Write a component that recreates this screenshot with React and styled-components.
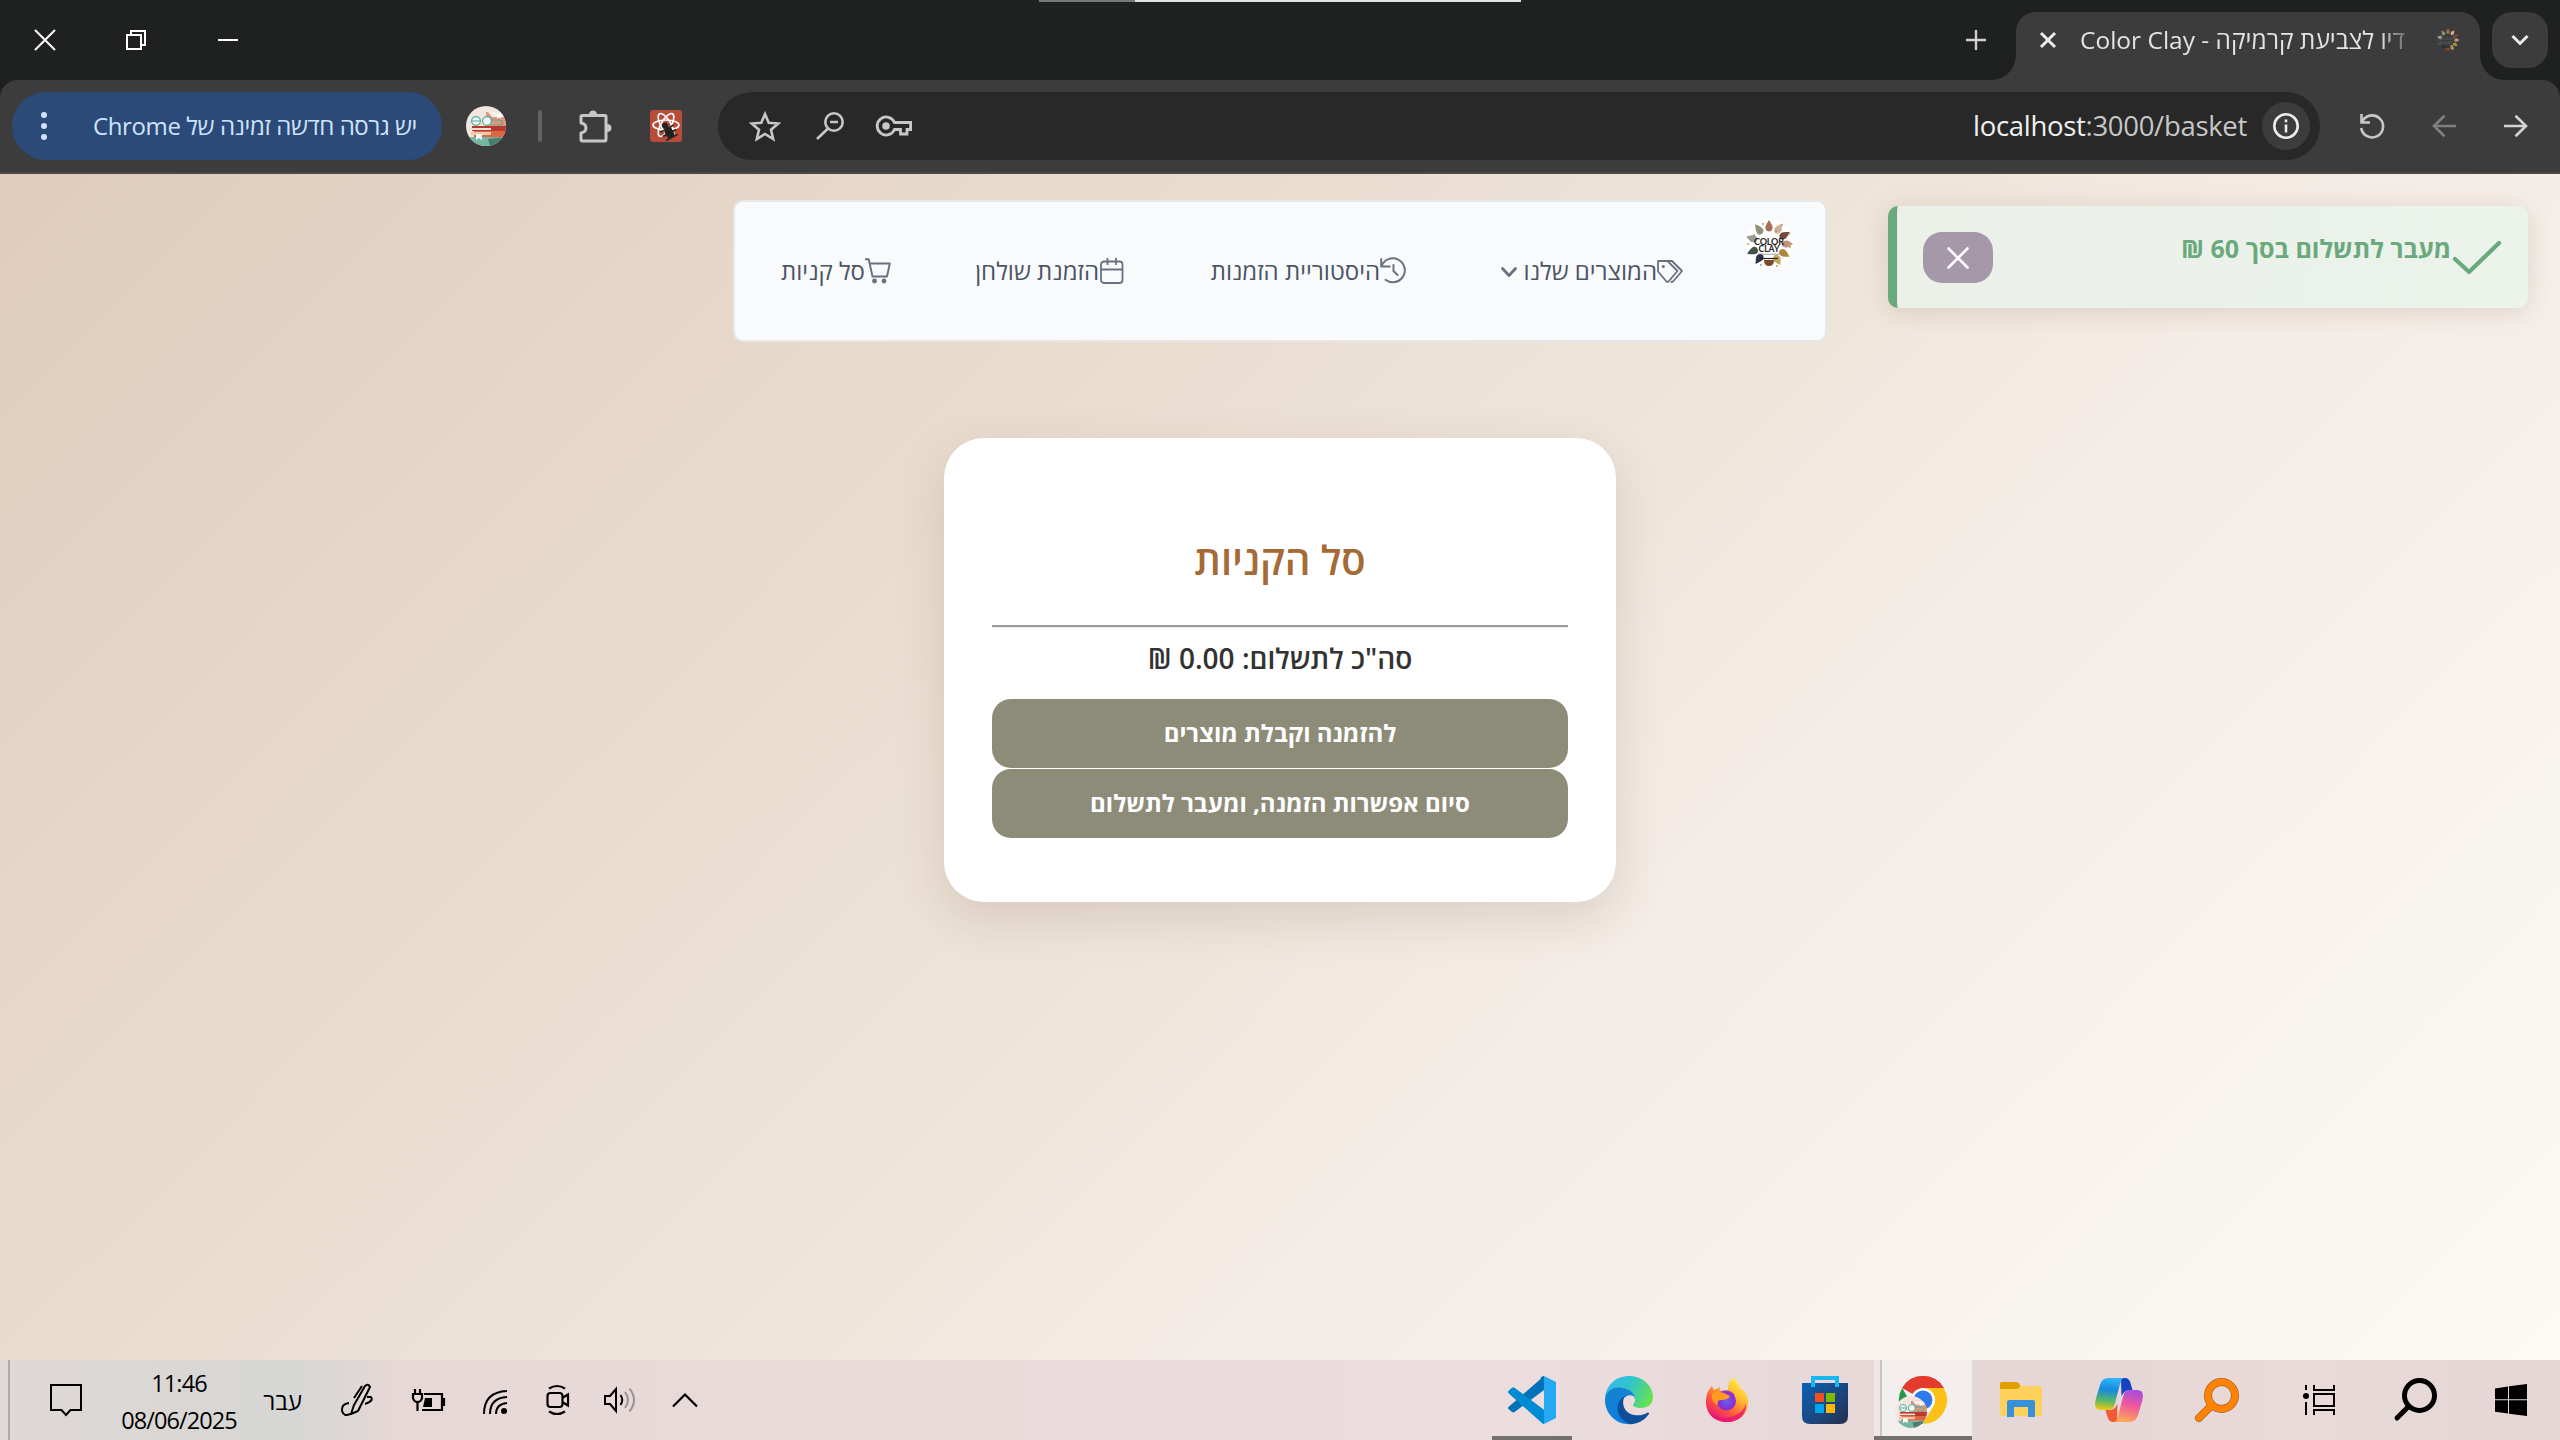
import React, { useId } from 'react';
import styled, { createGlobalStyle } from 'styled-components';

const Global = createGlobalStyle`
  * { box-sizing: border-box; }
  html, body { margin: 0; padding: 0; }
  body { font-family: "Open Sans", "Noto Sans", sans-serif; overflow: hidden; }
  svg { display: block; flex: none; overflow: visible; }
`;

const Screen = styled.div`
  width: 2560px;
  height: 1440px;
  display: flex;
  flex-direction: column;
  background: #1f2120;
`;

/* Positions a flow item after a gap */
const Slot = styled.div`
  flex: none;
  display: flex;
  align-items: center;
  margin-left: ${(p) => p.$gap || 0}px;
  margin-top: ${(p) => p.$drop || 0}px;
`;

const Label = styled.div`
  flex: none;
  direction: ${(p) => (p.$ltr ? 'ltr' : 'rtl')};
  text-align: ${(p) => p.$align || 'right'};
  width: ${(p) => p.$w}px;
  margin-left: ${(p) => p.$gap || 0}px;
  padding-top: ${(p) => p.$drop || 0}px;
  font-size: ${(p) => p.$size || 24}px;
  line-height: ${(p) => p.$lh || 32}px;
  letter-spacing: ${(p) => p.$track || 0}px;
  color: ${(p) => p.$color || '#fff'};
  font-weight: ${(p) => p.$weight || 400};
  white-space: nowrap;
`;

/* ---------- title bar ---------- */
const TitleBar = styled.header`
  position: relative;
  height: 80px;
  flex: none;
  display: flex;
  align-items: flex-end;
  justify-content: space-between;
`;
const TopLine = styled.div`
  position: absolute;
  top: 0;
  left: 1039px;
  width: 482px;
  height: 2px;
  background: linear-gradient(90deg, #757a78 96px, #dfe5e2 96px);
`;
const WindowButtons = styled.div`
  height: 80px;
  display: flex;
  align-items: center;
`;
const TabStrip = styled.div`
  height: 80px;
  width: 594px;
  display: flex;
  align-items: flex-end;
`;
const NewTab = styled.div`
  height: 80px;
  display: flex;
  align-items: center;
  width: 50px;
`;
const Tab = styled.div`
  position: relative;
  width: 464px;
  height: 68px;
  padding-left: 23px;
  border-radius: 20px 20px 0 0;
  background: #3c3c3c;
  display: flex;
  align-items: center;
  padding-bottom: 12px;
  &::before, &::after {
    content: "";
    position: absolute;
    bottom: 0;
    width: 24px;
    height: 24px;
  }
  &::before { left: -24px; background: radial-gradient(circle at 0 0, transparent 23.5px, #3c3c3c 24px); }
  &::after { right: -24px; background: radial-gradient(circle at 100% 0, transparent 23.5px, #3c3c3c 24px); }
`;
const TabTitle = styled(Label)`
  overflow: hidden;
  mask-image: linear-gradient(90deg, #000 300px, transparent 336px);
`;
const TabMenu = styled.div`
  width: 56px;
  height: 56px;
  margin: 0 12px 12px;
  border-radius: 20px;
  background: #3c3c3c;
  display: flex;
  align-items: center;
  justify-content: center;
  padding-bottom: 0;
`;

/* ---------- toolbar ---------- */
const Toolbar = styled.div`
  height: 94px;
  flex: none;
  background: #3c3c3c;
  border-bottom: 2px solid #4b4849;
  border-radius: 18px 18px 0 0;
  display: flex;
  align-items: center;
  padding: 0 0 0 12px;
`;
const UpdatePill = styled.div`
  width: 430px;
  height: 68px;
  border-radius: 34px;
  background: #2b4a77;
  display: flex;
  align-items: center;
  padding-left: 28px;
`;
const Divider = styled.div`
  width: 4px;
  height: 32px;
  margin-left: 32px;
  border-radius: 2px;
  background: #636363;
`;
const Omnibox = styled.div`
  width: 1602px;
  height: 68px;
  margin-left: 36px;
  border-radius: 34px;
  background: #282828;
  display: flex;
  align-items: center;
  padding-left: 31px;
`;
const InfoChip = styled.div`
  width: 48px;
  height: 48px;
  margin-left: 19px;
  border-radius: 50%;
  background: #3c3c3c;
  display: flex;
  align-items: center;
  justify-content: center;
`;
const Host = styled.span` color: #f0f0f0; `;

/* ---------- page ---------- */
const Page = styled.main`
  position: relative;
  flex: 1;
  padding-top: 26px;
  display: flex;
  flex-direction: column;
  align-items: center;
  background: linear-gradient(135deg, #dfccbc 0%, #efe6db 53%, #f3eae4 60%, #fcfaf4 100%);
`;
const Menubar = styled.nav`
  width: 1094px;
  height: 142px;
  border: 2px solid #e5e7eb;
  border-radius: 10px;
  background: #f9fafc;
  display: flex;
  align-items: center;
`;
const LogoSlot = styled.div`
  align-self: flex-start;
  margin: 17px 0 0 61px;
`;
const Card = styled.section`
  width: 672px;
  height: 464px;
  margin-top: 96px;
  padding: 92px 48px 0;
  border-radius: 40px;
  background: #fff;
  box-shadow: 0 16px 48px rgba(90, 60, 40, 0.15);
  display: flex;
  flex-direction: column;
  align-items: center;
`;
const Title = styled.h1`
  margin: 0;
  direction: rtl;
  font-size: 40px;
  line-height: 60px;
  font-weight: 600;
  color: #a56a35;
  white-space: nowrap;
`;
const Rule = styled.hr`
  width: 100%;
  margin: 35px 0 0;
  border: 0;
  height: 3px;
  border-top: 2px solid #9a9a9a;
  border-bottom: 1px solid #eee;
`;
const Total = styled.div`
  direction: rtl;
  margin-top: 10px;
  height: 61px;
  font-size: 28px;
  line-height: 40px;
  font-weight: 600;
  color: #333;
  white-space: nowrap;
`;
const Action = styled.button`
  width: 100%;
  height: 69px;
  margin: 0 0 1px;
  padding: 0 0 2px;
  border: 0;
  border-radius: 19px;
  background: #8d8c78;
  color: #fff;
  direction: rtl;
  font-family: inherit;
  font-size: 24px;
  font-weight: 700;
  letter-spacing: ${(p) => p.$track || 0}px;
`;
const Toast = styled.aside`
  position: absolute;
  left: 1888px;
  top: 32px;
  width: 640px;
  height: 102px;
  border-left: 9px solid #69a97c;
  border-radius: 10px;
  background: linear-gradient(100deg, #ebf0e9, #ebf3eb);
  box-shadow: 0 4px 24px rgba(90, 60, 40, 0.15);
  display: flex;
  align-items: flex-start;
  padding: 26px 0 0 26px;
`;
const ToastClose = styled.button`
  width: 70px;
  height: 51px;
  padding: 0;
  border: 0;
  border-radius: 19px;
  background: #a598a8;
  display: flex;
  align-items: center;
  justify-content: center;
`;

/* ---------- taskbar ---------- */
const Taskbar = styled.footer`
  height: 80px;
  flex: none;
  display: flex;
  justify-content: space-between;
  background: linear-gradient(90deg, #dfd8d6 0, #d9d7d5 200px, #d6d6d4 280px, #dad7d5 330px, #e5d8d6 390px, #e7dad8 750px, #eadcdc 1200px, #ecdedf 1500px, #e6d8d7 1860px, #e5d7d6 2100px, #e8dad7 2300px, #e4d6d5 2560px);
`;
const Tray = styled.div`
  display: flex;
  align-items: center;
`;
const DesktopEdge = styled.div`
  width: 2px;
  height: 80px;
  margin-left: 8px;
  background: #aea8a8;
`;
const Clock = styled.div`
  width: 140px;
  margin-left: 28px;
  padding-top: 4px;
  display: flex;
  flex-direction: column;
  align-items: center;
  font-size: 23.5px;
  line-height: 37px;
  letter-spacing: -0.9px;
  color: #000;
`;
const Apps = styled.div` display: flex; `;
const App_ = styled.div`
  width: 98px;
  height: 80px;
  display: flex;
  align-items: center;
  justify-content: center;
  padding-left: ${(p) => p.$nudge || 0}px;
  background: ${(p) =>
    p.$active ? 'linear-gradient(90deg, #efe6e5 6px, #cfc3c2 6px, #cfc3c2 8px, #f5eeee 8px)' : 'transparent'};
  box-shadow: ${(p) => (p.$active ? 'inset 0 -4px 0 #757070' : 'none')};
`;
const Running = styled(App_)`
  background: linear-gradient(#757070, #757070) 10px 100% / 80px 4px no-repeat;
`;

/* ---------- drawings ---------- */
const S = ({ w, h, vb, children, ...r }) => (
  <svg width={w} height={h} viewBox={vb || `0 0 ${w} ${h}`} fill="none" {...r}>{children}</svg>
);

function Avatar({ size }) {
  const id = useId();
  return (
    <S w={size} h={size} vb="0 0 40 40">
      <clipPath id={id}><circle cx="20" cy="20" r="20" /></clipPath>
      <g clipPath={`url(#${id})`}>
        <rect width="40" height="40" fill="#f3e6e0" />
        <path d="M20 6h20v14H20z" fill="#e2957b" />
        <path d="M22 6h18v5H26z" fill="#f4efe9" />
        <path d="M31 8h4v5l-2-2-2 2z" fill="#fff" />
        <rect x="6" y="20" width="34" height="5" fill="#b93a2c" />
        <rect x="3" y="22" width="22" height="2" fill="#f0dfd4" />
        <rect x="8" y="25" width="32" height="6" fill="#e0643f" />
        <rect x="5" y="26" width="20" height="3" fill="#f2c7ae" />
        <path d="M0 31h40v9H0z" fill="#78b5a3" />
        <path d="M22 33l18-2v9H24z" fill="#4a7f70" />
        <path d="M10 28h6v6l-3-2-3 2z" fill="#fff" />
        <g stroke="#4fae9c" strokeWidth="1.2">
          <circle cx="10" cy="15" r="4.4" fill="#eef6f3" />
          <circle cx="21" cy="15" r="4.4" fill="#eef6f3" />
          <path d="M6 15h8M25 14h9q3 1 2 5h-9" />
        </g>
      </g>
    </S>
  );
}

const PETALS = [
  ['#a56d55', 0, 9], ['#cfae9a', 32, 7.5], ['#76483a', 60, 9], ['#bf947c', 90, 7.5], ['#ad883c', 122, 9],
  ['#c3a860', 152, 8], ['#2a3347', 214, 9], ['#40534a', 246, 10], ['#989c97', 288, 8], ['#8e917b', 325, 10],
];
function Logo({ size, dark }) {
  return (
    <S w={size} h={size} vb="0 0 50 50">
      {!dark && <circle cx="25" cy="25" r="24" fill="#fff" />}
      {PETALS.map(([c, a, l]) => (
        <path key={a} fill={c} transform={`rotate(${a} 25 25)`}
          d={`M25 ${1}Q29 7 28.6 ${l}Q28 12.5 25 12.5Q22 12.5 21.4 ${l}Q21 7 25 1z`} />
      ))}
      <path d="M20 41h10q0 6-5 6t-5-6z" fill="#7b4a28" />
      <path d="M16 39.5h18" stroke="#222" strokeWidth="1.2" />
      {[[19, 5], [32, 12], [10, 16], [4, 25], [45, 15], [46, 28], [17, 46], [33, 47], [38, 6]].map(([x, y]) => (
        <circle key={`${x}-${y}`} cx={x} cy={y} r="0.9" fill="#b08c50" />
      ))}
      {!dark && <path d="M14 35.2h22" stroke="#777" strokeWidth="0.7" />}
      <text x="25" y="25.5" textAnchor="middle" fontFamily="Lato, sans-serif" fontSize="9" fontWeight="700" fill={dark ? '#555' : '#222'} textLength="30">COLOR</text>
      <text x="25" y="33.3" textAnchor="middle" fontFamily="Lato, sans-serif" fontSize="8.6" fontWeight="700" fill={dark ? '#555' : '#222'} textLength="21">CLAY</text>
    </S>
  );
}

const Vscode = () => (
  <S w={48} h={48}>
    <path d="M0 15.5l4-3.5q1.300-.9 2.600 0L36 34v14L1 17.500q-1.200-1 -1-2z" fill="#0089d0" />
    <path d="M0 32.500l4 3.500q1.300.9 2.600 0L36 14V0L1 30.500q-1.200 1 -1 2z" fill="#0073b8" />
    <path d="M0 15.500l4-3.500q1.300-.9 2.600 0L36 34v14q-1 0-2-1L1 17.500z" fill="#008bd3" />
    <path d="M36 0l12 6v36l-12 6z" fill="#27a8f2" />
    <path d="M36 0q-1.500 0-2.500 1l-1 1 3.500 10z" fill="#0073b8" />
  </S>
);
function Edge() {
  return (
    <S w={48} h={48}>
      <defs>
        <linearGradient id="eg" x1="0" y1="0" x2="48" y2="24" gradientUnits="userSpaceOnUse">
          <stop offset="0" stopColor="#35b5f5" /><stop offset=".5" stopColor="#31c5c9" /><stop offset="1" stopColor="#6be544" />
        </linearGradient>
        <linearGradient id="eb" x1="0" y1="12" x2="10" y2="48" gradientUnits="userSpaceOnUse">
          <stop offset="0" stopColor="#1583cf" /><stop offset="1" stopColor="#0d7ee0" />
        </linearGradient>
      </defs>
      <path d="M0 22C1 9 11 0 24 0c14 0 24 10 24 21 0 7-5 11-12 11-5 0-8-1.500-8-3 0-1 2-2 2-5.500C30 18 24 12 15 12 8 12 3 15 0 22z" fill="url(#eg)" />
      <path d="M0 24C0 16 7 11.500 14 11.500c9 0 15.500 5 16 11C29 19 24 18 20 21c-5 4-6 18 8 27-15 2-28-9-28-24z" fill="url(#eb)" />
      <path d="M19 22c-2 4-1 15 10 17 6 1 10-.5 13.500-2.300 1.200-.5 2 .5 1.300 1.500C39 45 32 48 25 48 14 44 10 34 14 26c1.500-3 4-5.500 8-6-1.500.5-2.500 1-3 2z" fill="#0f4f99" />
    </S>
  );
}
const Firefox = () => (
  <S w={42} h={44}>
    <defs>
      <linearGradient id="ff" x1="36" y1="4" x2="8" y2="42" gradientUnits="userSpaceOnUse">
        <stop offset="0" stopColor="#fff04a" /><stop offset=".35" stopColor="#ffb32b" /><stop offset=".65" stopColor="#ff5a3a" /><stop offset="1" stopColor="#e5127d" />
      </linearGradient>
      <radialGradient id="fp"><stop offset="0" stopColor="#6a5cf0" /><stop offset="1" stopColor="#8a2bc8" /></radialGradient>
    </defs>
    <path d="M27 0c4 2 6 6 7 10 5 3 8 8 8 14 0 12-9 20-21 20S0 36 0 24C0 17 2 12 6 8l2 4 6-3v4l8-1c0-5 1-9 5-12z" fill="url(#ff)" />
    <path d="M2 32c5 8 18 10 28 5 5-2 9-7 10-12 1 12-8 19-19 19C11 44 4 39 2 32z" fill="#ea1276" opacity=".75" />
    <circle cx="20.500" cy="23" r="9.500" fill="url(#fp)" />
    <path d="M6 16c4-4 9-4 14 0l4 2c-1 3-5 4-9 4-3 0-4 2-3 5-5-2-7-6-6-11z" fill="#ff9a1f" />
    <path d="M14 14q8-4 15 3-5 1-7-1z" fill="#9a2fc9" />
  </S>
);
const Store = () => (
  <S w={46} h={48}>
    <defs><linearGradient id="st" x1="0" y1="8" x2="40" y2="48" gradientUnits="userSpaceOnUse"><stop offset="0" stopColor="#0a62b5" /><stop offset="1" stopColor="#263358" /></linearGradient></defs>
    <path d="M0 7h46v33q0 8-8 8H8q-8 0-8-8z" fill="url(#st)" />
    <path d="M11 11V2h24v9" stroke="#19b5f5" strokeWidth="4" />
    <path d="M13 17h9v9h-9z" fill="#f25022" /><path d="M24 17h9v9h-9z" fill="#7fba00" />
    <path d="M13 28h9v9h-9z" fill="#00a4ef" /><path d="M24 28h9v9h-9z" fill="#ffb900" />
  </S>
);
const ChromeWrap = styled.div`
  position: relative;
  width: 48px;
  height: 48px;
`;
const AvatarBadge = styled.div`
  position: absolute;
  left: -4px;
  top: 20px;
`;
const Chrome = () => (
  <ChromeWrap>
    <S w={48} h={48}>
      <path d="M24 24L3.200 12A24 24 0 0 1 44.800 12z" fill="#e33b2e" />
      <path d="M3.200 12L13.600 30 24 48A24 24 0 0 1 3.200 12z" fill="#279847" />
      <path d="M44.800 12A24 24 0 0 1 24 48L34.400 30 24 12z" fill="#fbc116" />
      <path d="M3.200 12A24 24 0 0 1 44.800 12H24v8z" fill="#e33b2e" />
      <circle cx="24" cy="24" r="12" fill="#fff" /><circle cx="24" cy="24" r="9.500" fill="#3079ea" />
    </S>
    <AvatarBadge><Avatar size={32} /></AvatarBadge>
  </ChromeWrap>
);
const Folder = () => (
  <S w={42} h={36}>
    <path d="M0 2q0-2 2-2h14l5 4h19q2 0 2 2v26q0 2-2 2H2q-2 0-2-2z" fill="#ffd05a" />
    <path d="M0 2q0-2 2-2h14q3 0 4 3t-4 4H0z" fill="#dfa000" />
    <path d="M7 20q0-2 2-2h24q2 0 2 2v15h-7V25H14v10H7z" fill="#3690dc" />
  </S>
);
const Copilot = () => (
  <S w={48} h={44}>
    <defs>
      <linearGradient id="c1" x1="10" y1="0" x2="6" y2="32" gradientUnits="userSpaceOnUse"><stop offset="0" stopColor="#2fb4f8" /><stop offset=".35" stopColor="#1689dc" /><stop offset=".7" stopColor="#5cb865" /><stop offset="1" stopColor="#f4cb0a" /></linearGradient>
      <linearGradient id="c2" x1="42" y1="12" x2="34" y2="44" gradientUnits="userSpaceOnUse"><stop offset="0" stopColor="#a34be4" /><stop offset=".5" stopColor="#f0589b" /><stop offset="1" stopColor="#fda65a" /></linearGradient>
    </defs>
    <path d="M26 0h4q4 0 5.500 5l2 7h-3q-5 0-8 6z" fill="#1742c0" />
    <path d="M22 44h-4q-4 0-5.500-5l-2-7h4q5 0 8-6z" fill="#f05a35" />
    <path d="M29 0H13Q7 0 5 7L.8 21Q-2 32 6 32h7q5 0 6.500-5L25 6q1.500-6 4-6z" fill="url(#c1)" />
    <path d="M19 44h16q6 0 8-7l4.200-14Q50 12 42 12h-7q-5 0-6.500 5L23 38q-1.500 6-4 6z" fill="url(#c2)" />
  </S>
);
const Magnifier = ({ color, edge }) => (
  <S w={44} h={44}>
    {edge && <g stroke={edge}><circle cx="26.500" cy="17.500" r="13.500" strokeWidth="8" /><path d="M17 27L4 40" strokeWidth="8" strokeLinecap="round" /></g>}
    <g stroke={color}><circle cx="26.500" cy="17.500" r={edge ? 13.5 : 15} strokeWidth={edge ? 6.5 : 5} /><path d="M16 28L4 40" strokeWidth={edge ? 6.500 : 5} strokeLinecap="round" /></g>
  </S>
);
const TaskView = () => (
  <S w={32} h={30} stroke="#000" strokeWidth="2">
    <path d="M3 0v5M3 17v13M11 0v5h20V0M11 9h20v12H11zM11 30v-5h20v5" />
    <circle cx="3" cy="11" r="3" fill="#000" stroke="none" />
  </S>
);
const Windows = () => (
  <S w={32} h={32} fill="#000">
    <path fill="#000" d="M0 4.500L13 2.500V15.200H0zM14 2.300L32 0V15.200H14zM0 16.300H13V29.500L0 27.700zM14 16.300H32V32L14 29.700z" />
  </S>
);

export default function App() {
  return (
    <Screen>
      <Global />
      <TitleBar>
        <TopLine />
        <WindowButtons>
          <Slot $gap={35}><S w={20} h={20} stroke="#fff" strokeWidth="2"><path d="M0 0l20 20M20 0L0 20" /></S></Slot>
          <Slot $gap={71}><S w={20} h={20} stroke="#fff" strokeWidth="2"><path d="M1 5h14v14H1zM5 5V1h14v14h-4" /></S></Slot>
          <Slot $gap={72}><S w={20} h={20} stroke="#fff" strokeWidth="2"><path d="M0 10h20" /></S></Slot>
        </WindowButtons>
        <TabStrip>
          <NewTab><S w={20} h={20} stroke="#d0d0d0" strokeWidth="2.400"><path d="M0 10h20M10 0v20" /></S></NewTab>
          <Tab>
            <S w={18} h={16} stroke="#ececec" strokeWidth="3"><path d="M2 1l14 14M16 1L2 15" /></S>
            <TabTitle $w={336} $gap={23} $size={24.5} $lh={40} $drop={0} $ltr $align="left" $color="#e3e3e3"><bdi dir="ltr">Color Clay - ‏דיו לצביעת קרמיקה</bdi></TabTitle>
            <Slot $gap={20}><Logo size={24} dark /></Slot>
          </Tab>
          <TabMenu><S w={18} h={10} stroke="#ececec" strokeWidth="3"><path d="M1.500 1l7.500 7.500L16.500 1" /></S></TabMenu>
        </TabStrip>
      </TitleBar>

      <Toolbar>
        <UpdatePill>
          <S w={8} h={28} fill="#d3e3fd"><g fill="#d3e3fd"><circle cx="4" cy="3" r="3" /><circle cx="4" cy="14" r="3" /><circle cx="4" cy="25" r="3" /></g></S>
          <Label $w={350} $gap={19} $size={24} $color="#cfe3fc" $track={-0.4}>יש גרסה חדשה זמינה של Chrome</Label>
        </UpdatePill>
        <Slot $gap={24}><Avatar size={40} /></Slot>
        <Divider />
        <Slot $gap={37}>
          <S w={33} h={33} stroke="#c7c7c7" strokeWidth="3">
            <path d="M3.500 5.500H26q1 0 1 1V29q0 2-1 2H3.500q-1.500 0-1.500-1.500V23q5-1 5-5t-5-5V7q0-1.500 1.500-1.500z" strokeLinejoin="round" />
            <path d="M10 5q0-4.500 4-4.500T18 5zM28 14q4.500 0 4.500 4T28 22z" fill="#c7c7c7" stroke="none" />
          </S>
        </Slot>
        <Slot $gap={38}>
          <S w={32} h={32}>
            <rect width="32" height="32" rx="3" fill="#b94c38" />
            <g stroke="#fff" strokeWidth="1.600"><ellipse cx="16" cy="15" rx="13" ry="5" /><ellipse cx="16" cy="15" rx="13" ry="5" transform="rotate(60 16 15)" /><ellipse cx="16" cy="15" rx="13" ry="5" transform="rotate(120 16 15)" /></g>
            <g transform="rotate(-28 19 21)" fill="#222"><circle cx="18" cy="14.500" r="3" /><rect x="14.500" y="17" width="8" height="11" rx="3.500" /><path d="M11 18h15M11 23h15M12 28h13" stroke="#222" strokeWidth="1.600" /></g>
          </S>
        </Slot>
        <Omnibox>
          <S w={32} h={30} stroke="#c7c7c7" strokeWidth="2.600"><path d="M16 3l3.700 8.700 9.500.8-7.200 6.200 2.200 9.300-8.200-5-8.200 5 2.200-9.300L2.800 12.500l9.500-.8z" strokeLinejoin="miter" /></S>
          <Slot $gap={35}><S w={28} h={28} stroke="#c7c7c7" strokeWidth="2.600"><circle cx="18" cy="10" r="8.700" /><path d="M12 16.500L1 27M14 10h8" /></S></Slot>
          <Slot $gap={32}><S w={36} h={20} stroke="#c7c7c7" strokeWidth="2.800"><path d="M18.500 6.500H34.600v7H31V18h-6.500v-4.500h-6A9 9 0 1 1 18.500 6.500z" /><circle cx="10" cy="10" r="3.800" fill="#c7c7c7" stroke="none" /></S></Slot>
          <Label $w={270} $gap={1061} $size={27.5} $lh={40} $ltr $color="#c7c7c7" $track={-0.3}><Host>localhost</Host>:3000/basket</Label>
          <InfoChip><S w={26} h={26} stroke="#ececec" strokeWidth="2.600"><circle cx="13" cy="13" r="11.700" /><path d="M13 11.500v8M13 6.500v2.800" /></S></InfoChip>
        </Omnibox>
        <Slot $gap={40}><S w={24} h={24} stroke="#c7c7c7" strokeWidth="2.600"><path d="M1.500 0v8.500H10M2 8A11 11 0 1 1 1.200 14" /></S></Slot>
        <Slot $gap={48}><S w={24} h={22} stroke="#7f7f7f" strokeWidth="2.600"><path d="M24 11H2M12.500.8L2 11l10.500 10.200" /></S></Slot>
        <Slot $gap={48}><S w={24} h={22} stroke="#d3d3d3" strokeWidth="2.600"><path d="M0 11h22M11.500.8L22 11 11.500 21.200" /></S></Slot>
      </Toolbar>

      <Page>
        <Menubar>
          <Label $w={88} $gap={42} $color="#4b5563">סל קניות</Label>
          <Slot><S w={26} h={26} vb="0 0 26 26" stroke="#6b7080" strokeWidth="1.900"><path d="M0 1.200h3.700L7.500 18.500H22L24.800 5.500H5" strokeLinejoin="round" /><g fill="#6b7080" stroke="none"><circle cx="9.500" cy="23" r="2.400" /><circle cx="19" cy="23" r="2.400" /></g></S></Slot>
          <Label $w={140} $gap={68} $color="#4b5563">הזמנת שולחן</Label>
          <Slot $gap={1}><S w={24} h={26} stroke="#6b7080" strokeWidth="1.800"><rect x="1" y="3.500" width="21.500" height="21.500" rx="3" /><path d="M1 11.500h21.500M7.500 0v7M16 0v7" /></S></Slot>
          <Label $w={190} $gap={66} $color="#4b5563">היסטוריית הזמנות</Label>
          <Slot><S w={26} h={26} stroke="#6b7080" strokeWidth="2"><path d="M1.200 1v7.600h8.600M1.600 8A12 12 0 1 1 5.500 21.800M13.500 7v6l4 4" strokeLinecap="round" strokeLinejoin="round" /></S></Slot>
          <Slot $gap={95} $drop={2}><S w={16} h={11} stroke="#6b7080" strokeWidth="2.800"><path d="M1.500 1.500L8 8.500l6.500-7" strokeLinecap="round" strokeLinejoin="round" /></S></Slot>
          <Label $w={140} $gap={0} $color="#4b5563">המוצרים שלנו</Label>
          <Slot><S w={26} h={24} stroke="#6b7080" strokeWidth="1.800"><path d="M1 2h9.500l10 10-9 10.500q-1 .8-2 0L1 12.500zM10.500 2H15l10 10-9 10.500q-1.200 1-2.300 0" strokeLinejoin="round" /><circle cx="6.300" cy="7.500" r="1.600" fill="#6b7080" stroke="none" /></S></Slot>
          <LogoSlot><Logo size={50} /></LogoSlot>
        </Menubar>

        <Card>
          <Title>סל הקניות</Title>
          <Rule />
          <Total>סה"כ לתשלום: 0.00 ₪</Total>
          <Action>להזמנה וקבלת מוצרים</Action>
          <Action>סיום אפשרות הזמנה, ומעבר לתשלום</Action>
        </Card>

        <Toast>
          <ToastClose><S w={22} h={22} stroke="#fff" strokeWidth="2.600"><path d="M1.500 1.500l19 19M20.500 1.500l-19 19" strokeLinecap="round" /></S></ToastClose>
          <Label $w={340} $gap={118} $size={25} $weight={700} $color="#69a97c">מעבר לתשלום בסך 60 ₪</Label>
          <Slot $gap={2} $drop={9}><S w={48} h={34} stroke="#69a97c" strokeWidth="4.200"><path d="M2 18l14 13L46 2" strokeLinecap="round" strokeLinejoin="round" /></S></Slot>
        </Toast>
      </Page>

      <Taskbar>
        <Tray>
          <DesktopEdge />
          <Slot $gap={40}><S w={32} h={32} stroke="#000" strokeWidth="2"><path d="M1 1h30v25H20.500L16 31l-4.500-5H1z" /></S></Slot>
          <Slot $gap={-1}><Clock><span>11:46</span><span>08/06/2025</span></Clock></Slot>
          <Label $w={50} $gap={3} $size={24} $color="#000" $drop={2}>עבר</Label>
          <Slot $gap={39}>
            <S w={32} h={32} stroke="#000" strokeWidth="2"><path d="M10 30l3-9L24 2q3-3 5 1L17 27zM13 14l8-12M8 19q-8 1-7 8 2 6 8 3M26 13h4q3 4-6 7" strokeLinejoin="round" /></S>
          </Slot>
          <Slot $gap={39}>
            <S w={33} h={24} stroke="#000" strokeWidth="2.200"><path d="M12 6h18v16H10M32 10v8M3 1v5M8 1v5M5.500 13v10" /><path d="M1 6h9v4q-1 4-4.500 4T1 10z" fill="#e7dad8" /><path d="M13 10h7v9h-9z" fill="#000" stroke="none" /></S>
          </Slot>
          <Slot $gap={38} $drop={4}>
            <S w={24} h={24} stroke="#000" strokeWidth="2"><path d="M1 24Q1 2 24 1M7 24Q7 8 24 7M13 24q0-10 11-11" /><circle cx="21" cy="21" r="3" fill="#000" stroke="none" /></S>
          </Slot>
          <Slot $gap={39}>
            <S w={24} h={30} stroke="#000" strokeWidth="2.200"><rect x="1.500" y="8" width="15" height="14" rx="3" /><path d="M17 12.500l5-3v11l-5-3M3 3.500q8-5 16 0M3 26.500q8 5 16 0" /></S>
          </Slot>
          <Slot $gap={34}>
            <S w={34} h={26} stroke="#000" strokeWidth="2"><path d="M1 9h5l6-7v22l-6-7H1z" /><path d="M16.500 8q3.500 5 0 10" /><g stroke="#9b9191"><path d="M21 5q6 8 0 16M25.500 1.500q9 11.500 0 23" /></g></S>
          </Slot>
          <Slot $gap={34}><S w={26} h={14} stroke="#000" strokeWidth="2.200"><path d="M1 13.500L13 1.500l12 12" /></S></Slot>
        </Tray>
        <Apps>
          <Running $nudge={2}><Vscode /></Running>
          <App_><Edge /></App_>
          <App_><Firefox /></App_>
          <App_><Store /></App_>
          <App_ $active><Chrome /></App_>
          <App_><Folder /></App_>
          <App_><Copilot /></App_>
          <App_><Magnifier color="#ff8303" edge="#b5602a" /></App_>
          <App_ $nudge={8}><TaskView /></App_>
          <App_ $nudge={4}><Magnifier color="#000" /></App_>
          <App_><Windows /></App_>
        </Apps>
      </Taskbar>
    </Screen>
  );
}
